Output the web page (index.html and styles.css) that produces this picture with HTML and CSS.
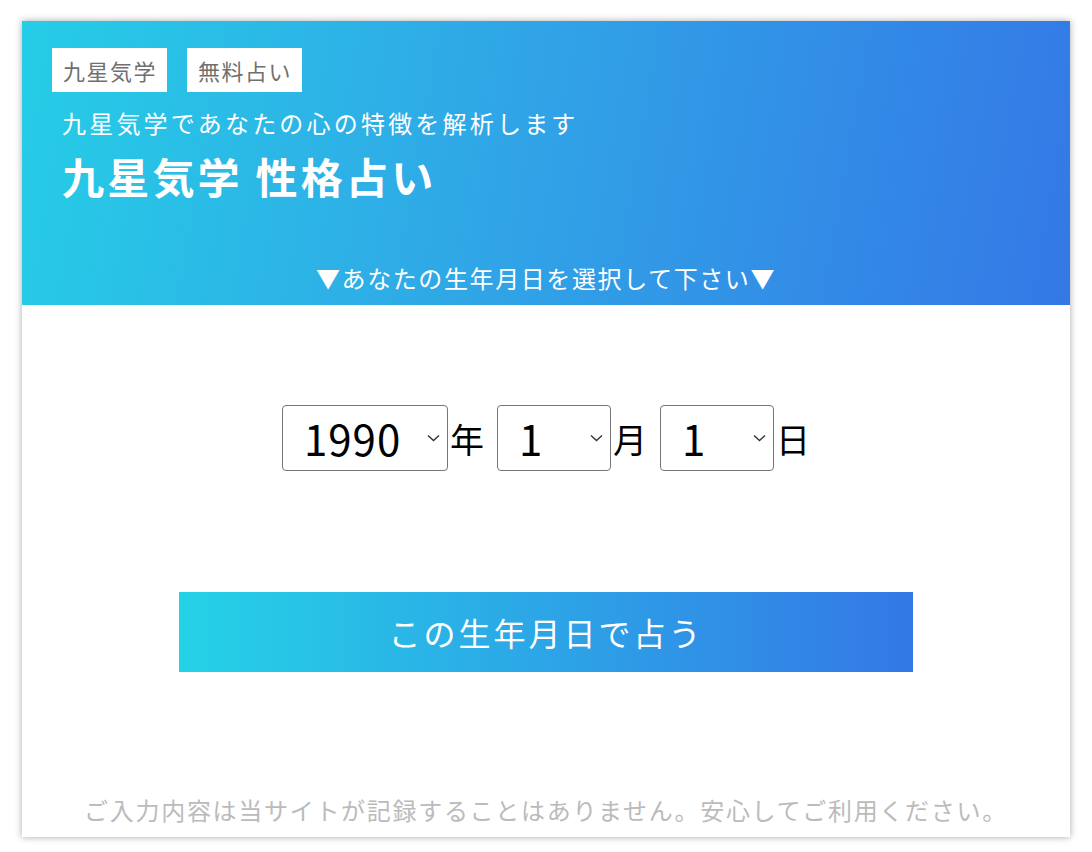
FILE: index.html
```html
<!DOCTYPE html>
<html lang="ja">
<head>
    <meta charset="UTF-8">
    <meta name="viewport" content="width=device-width, initial-scale=1.0">
    <title>九星気学 性格占い</title>
    <link rel="stylesheet" href="styles.css">
</head>
<body>
    <div class="card">
        <div class="header">
            <div class="tags">
                <span class="tag">九星気学</span>
                <span class="tag">無料占い</span>
            </div>
            <p class="lead">九星気学であなたの心の特徴を解析します</p>
            <h1 class="title">九星気学 性格占い</h1>
            <p class="guide">▼あなたの生年月日を選択して下さい▼</p>
        </div>

        <div class="content">
            <div class="birth-row">
                <div class="select-wrap year">
                    <select id="year">
                        <option>1990</option>
                    </select>
                    <svg class="chevron" width="13" height="8" viewBox="0 0 13 8"><path d="M1 1.5 L6.5 6.5 L12 1.5" fill="none" stroke="#333" stroke-width="1.4"/></svg>
                </div>
                <span class="unit">年</span>
                <div class="select-wrap">
                    <select id="month">
                        <option>1</option>
                    </select>
                    <svg class="chevron" width="13" height="8" viewBox="0 0 13 8"><path d="M1 1.5 L6.5 6.5 L12 1.5" fill="none" stroke="#333" stroke-width="1.4"/></svg>
                </div>
                <span class="unit">月</span>
                <div class="select-wrap">
                    <select id="day">
                        <option>1</option>
                    </select>
                    <svg class="chevron" width="13" height="8" viewBox="0 0 13 8"><path d="M1 1.5 L6.5 6.5 L12 1.5" fill="none" stroke="#333" stroke-width="1.4"/></svg>
                </div>
                <span class="unit">日</span>
            </div>

            <button class="btn">この生年月日で占う</button>

            <p class="note">ご入力内容は当サイトが記録することはありません。安心してご利用ください。</p>
        </div>
    </div>
</body>
</html>
```

FILE: styles.css
```css
body {
    margin: 0;
    background-color: #fff;
    font-family: "Noto Sans CJK JP", "Noto Sans", sans-serif;
}
.card {
    margin: 21px 22px 15px;
    background-color: #fff;
    box-shadow: 0 0 7px rgba(0, 0, 0, 0.35);
}
.header {
    background: linear-gradient(100deg, #26cde6 0%, #30a6e6 45%, #3478e6 100%);
    color: #fff;
    padding: 27px 30px 10px;
}
.tags {
    display: flex;
    gap: 20px;
}
.tag {
    background-color: #fff;
    color: #707070;
    font-size: 22px;
    letter-spacing: 1.5px;
    height: 44px;
    line-height: 44px;
    padding: 0 10px 0 11px;
}
.lead {
    margin: 14px 0 0 10px;
    font-size: 24px;
    line-height: 34px;
    letter-spacing: 3.2px;
}
.title {
    margin: 8px 0 0 10px;
    font-size: 42px;
    line-height: 55px;
    letter-spacing: 3.2px;
    font-weight: bold;
}
.guide {
    margin: 58px 0 0;
    text-align: center;
    font-size: 24px;
    line-height: 34px;
    letter-spacing: 1.6px;
}
.content {
    padding: 100px 0 10px;
    display: flex;
    flex-direction: column;
    align-items: center;
}
.birth-row {
    display: flex;
    align-items: center;
}
.select-wrap {
    position: relative;
}
.select-wrap select {
    appearance: none;
    -webkit-appearance: none;
    width: 114px;
    height: 66px;
    padding: 0 0 0 21px;
    border: 1px solid #767676;
    border-radius: 4px;
    background-color: #fff;
    color: #000;
    font-family: "Noto Sans CJK JP", sans-serif;
    font-size: 42px;
    line-height: 64px;
    letter-spacing: 1px;
}
.select-wrap.year select {
    width: 166px;
}
.chevron {
    position: absolute;
    right: 8px;
    top: 29px;
    pointer-events: none;
}
.unit {
    font-size: 34px;
    margin: 0 13px 0 2px;
}
.unit:last-child {
    margin-right: 0;
}
.btn {
    margin-top: 121px;
    width: 734px;
    height: 80px;
    border: none;
    background: linear-gradient(to right, #25d2e6, #3478e6);
    color: #fff;
    font-family: "Noto Sans CJK JP", sans-serif;
    font-size: 32px;
    letter-spacing: 3px;
    cursor: pointer;
}
.note {
    margin: 121px 0 0;
    color: #bbb;
    font-size: 24px;
    line-height: 34px;
    letter-spacing: 1.7px;
}
```
